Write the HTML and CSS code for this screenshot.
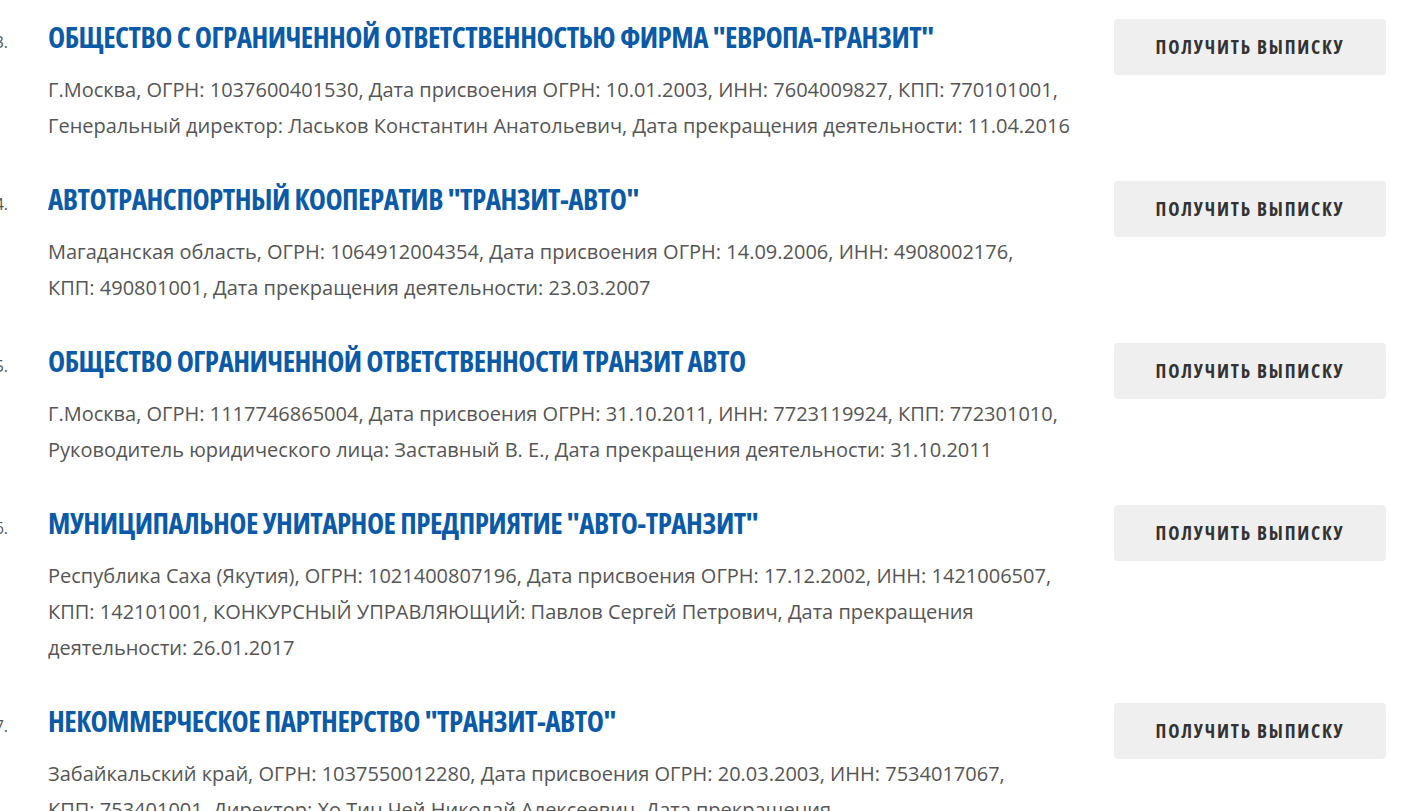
FILE: index.html
```html
<!DOCTYPE html>
<html lang="ru">
<head>
<meta charset="utf-8">
<title>Список организаций</title>
<link rel="stylesheet" href="styles.css">
</head>
<body>
<ol class="list">
  <li class="item">
    <div class="entry">
      <span class="num">3.</span>
      <div class="content">
        <a class="title" href="#">ОБЩЕСТВО С ОГРАНИЧЕННОЙ ОТВЕТСТВЕННОСТЬЮ ФИРМА "ЕВРОПА-ТРАНЗИТ"</a>
        <p class="desc">Г.Москва, ОГРН:&nbsp;1037600401530, Дата присвоения ОГРН:&nbsp;10.01.2003, ИНН:&nbsp;7604009827, КПП:&nbsp;770101001, Генеральный директор: Ласьков Константин Анатольевич, Дата прекращения деятельности:&nbsp;11.04.2016</p>
      </div>
    </div>
    <a class="btn" href="#">ПОЛУЧИТЬ ВЫПИСКУ</a>
  </li>
  <li class="item">
    <div class="entry">
      <span class="num">4.</span>
      <div class="content">
        <a class="title" href="#">АВТОТРАНСПОРТНЫЙ КООПЕРАТИВ "ТРАНЗИТ-АВТО"</a>
        <p class="desc">Магаданская область, ОГРН:&nbsp;1064912004354, Дата присвоения ОГРН:&nbsp;14.09.2006, ИНН:&nbsp;4908002176, КПП:&nbsp;490801001, Дата прекращения деятельности:&nbsp;23.03.2007</p>
      </div>
    </div>
    <a class="btn" href="#">ПОЛУЧИТЬ ВЫПИСКУ</a>
  </li>
  <li class="item">
    <div class="entry">
      <span class="num">5.</span>
      <div class="content">
        <a class="title" href="#">ОБЩЕСТВО ОГРАНИЧЕННОЙ ОТВЕТСТВЕННОСТИ ТРАНЗИТ АВТО</a>
        <p class="desc">Г.Москва, ОГРН:&nbsp;1117746865004, Дата присвоения ОГРН:&nbsp;31.10.2011, ИНН:&nbsp;7723119924, КПП:&nbsp;772301010, Руководитель юридического лица: Заставный В. Е., Дата прекращения деятельности:&nbsp;31.10.2011</p>
      </div>
    </div>
    <a class="btn" href="#">ПОЛУЧИТЬ ВЫПИСКУ</a>
  </li>
  <li class="item">
    <div class="entry">
      <span class="num">6.</span>
      <div class="content">
        <a class="title" href="#">МУНИЦИПАЛЬНОЕ УНИТАРНОЕ ПРЕДПРИЯТИЕ "АВТО-ТРАНЗИТ"</a>
        <p class="desc">Республика Саха (Якутия), ОГРН:&nbsp;1021400807196, Дата присвоения ОГРН:&nbsp;17.12.2002, ИНН:&nbsp;1421006507, КПП:&nbsp;142101001, КОНКУРСНЫЙ УПРАВЛЯЮЩИЙ: Павлов Сергей Петрович, Дата прекращения деятельности:&nbsp;26.01.2017</p>
      </div>
    </div>
    <a class="btn" href="#">ПОЛУЧИТЬ ВЫПИСКУ</a>
  </li>
  <li class="item">
    <div class="entry">
      <span class="num">7.</span>
      <div class="content">
        <a class="title" href="#">НЕКОММЕРЧЕСКОЕ ПАРТНЕРСТВО "ТРАНЗИТ-АВТО"</a>
        <p class="desc">Забайкальский край, ОГРН:&nbsp;1037550012280, Дата присвоения ОГРН:&nbsp;20.03.2003, ИНН:&nbsp;7534017067, КПП:&nbsp;753401001, Директор: Хо Тин Чей Николай Алексеевич, Дата прекращения деятельности:&nbsp;14.05.2012</p>
      </div>
    </div>
    <a class="btn" href="#">ПОЛУЧИТЬ ВЫПИСКУ</a>
  </li>
</ol>
</body>
</html>
```
FILE: styles.css
```css
html, body {
  margin: 0;
  padding: 0;
  background: #ffffff;
  overflow: hidden;
}
body {
  font-family: "Open Sans", "Noto Sans", sans-serif;
  color: #555555;
}
.list {
  list-style: none;
  margin: 0;
  padding: 19px 29px 0 0;
  display: flex;
  flex-direction: column;
  gap: 37px;
}
.item {
  display: flex;
  align-items: flex-start;
  gap: 34px;
}
.entry {
  flex: 1;
  display: flex;
  align-items: baseline;
  min-width: 0;
}
.num {
  flex: 0 0 40px;
  margin-left: -32px;
  text-align: right;
  font-size: 16px;
  color: #555555;
}
.content {
  flex: 1;
  margin-left: 40px;
  min-width: 0;
}
.title {
  display: block;
  font-family: "Open Sans", sans-serif;
  font-stretch: 75%;
  font-weight: 700;
  font-size: 29px;
  letter-spacing: -0.5px;
  line-height: 36px;
  color: #0a5aa8;
  text-decoration: none;
}
.desc {
  margin: 17px 0 0;
  font-size: 20px;
  line-height: 36px;
  color: #555555;
}
.btn {
  flex: 0 0 272px;
  height: 56px;
  display: flex;
  align-items: center;
  justify-content: center;
  background: #efefef;
  border-radius: 4px;
  font-family: "Open Sans", sans-serif;
  font-stretch: 75%;
  font-weight: 700;
  font-size: 19px;
  letter-spacing: 1.8px;
  color: #333333;
  text-decoration: none;
}
```
